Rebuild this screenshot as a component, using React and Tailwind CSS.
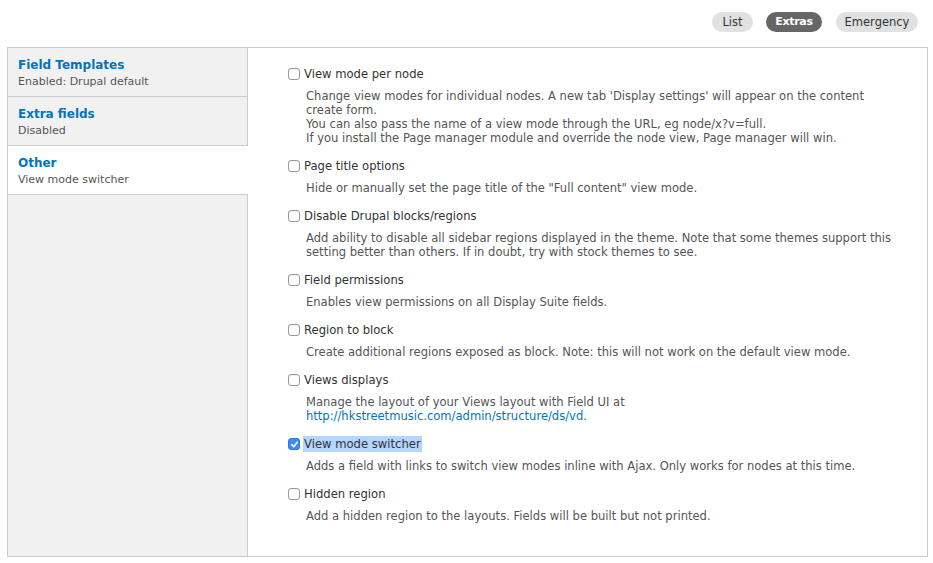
import React, { useState } from "react";

const tabs = [
  { title: "Field Templates", summary: "Enabled: Drupal default" },
  { title: "Extra fields", summary: "Disabled" },
  { title: "Other", summary: "View mode switcher" },
];

const options = [
  {
    label: "View mode per node",
    desc: [
      "Change view modes for individual nodes. A new tab 'Display settings' will appear on the content",
      "create form.",
      "You can also pass the name of a view mode through the URL, eg node/x?v=full.",
      "If you install the Page manager module and override the node view, Page manager will win.",
    ],
  },
  {
    label: "Page title options",
    desc: ['Hide or manually set the page title of the "Full content" view mode.'],
  },
  {
    label: "Disable Drupal blocks/regions",
    desc: [
      "Add ability to disable all sidebar regions displayed in the theme. Note that some themes support this",
      "setting better than others. If in doubt, try with stock themes to see.",
    ],
  },
  {
    label: "Field permissions",
    desc: ["Enables view permissions on all Display Suite fields."],
  },
  {
    label: "Region to block",
    desc: ["Create additional regions exposed as block. Note: this will not work on the default view mode."],
  },
  {
    label: "Views displays",
    desc: ["Manage the layout of your Views layout with Field UI at"],
    link: "http://hkstreetmusic.com/admin/structure/ds/vd",
  },
  {
    label: "View mode switcher",
    desc: ["Adds a field with links to switch view modes inline with Ajax. Only works for nodes at this time."],
    checked: true,
  },
  {
    label: "Hidden region",
    desc: ["Add a hidden region to the layouts. Fields will be built but not printed."],
  },
];

function Checkbox({ checked }) {
  if (checked) {
    return (
      <span className="w-[12px] h-[12px] rounded-[3px] bg-[#3b8cf5] border border-[#2f7be0] flex items-center justify-center shrink-0">
        <svg width="9" height="9" viewBox="0 0 10 10">
          <path d="M2 5.2 L4.2 7.4 L8 2.4" fill="none" stroke="white" strokeWidth="1.8" strokeLinecap="round" strokeLinejoin="round" />
        </svg>
      </span>
    );
  }
  return (
    <span className="w-[12px] h-[12px] rounded-[3px] bg-white border border-[#9a9a9a] shadow-[inset_0_1px_1px_rgba(0,0,0,0.08)] shrink-0" />
  );
}

export default function App() {
  const [active] = useState(2);

  return (
    <div
      className="w-[933px] h-[563px] bg-white text-[#333] overflow-hidden"
      style={{ fontFamily: '"DejaVu Sans", "Lucida Grande", Verdana, sans-serif' }}
    >
      {/* secondary tabs */}
      <div className="flex justify-end pt-[12px] pr-[15px] h-[47px]">
        <span className="w-[41px] h-[20px] rounded-[10px] bg-[#e1e1e1] text-[#333] text-[11.5px] leading-[20px] text-center">List</span>
        <span className="ml-[13px] w-[56px] h-[20px] rounded-[10px] bg-[#666] text-white font-bold text-[11px] leading-[20px] text-center tracking-[-0.3px]">Extras</span>
        <span className="ml-[14px] w-[82px] h-[20px] rounded-[10px] bg-[#e1e1e1] text-[#333] text-[11.5px] leading-[20px] text-center">Emergency</span>
      </div>

      <div className="ml-[7px] w-[921px] h-[510px] border border-[#ccc] flex">
        {/* vertical tabs */}
        <div className="w-[240px] bg-[#f1f1f1] border-r border-[#ccc] flex flex-col shrink-0">
          {tabs.map((t, i) => (
            <div
              key={t.title}
              className={
                "h-[49px] pl-[10px] pt-[10px] border-b border-[#ccc] " +
                (i === active ? "bg-white -mr-px" : "")
              }
            >
              <div className="text-[#0074bd] font-bold text-[12px] leading-[15px]">{t.title}</div>
              <div className="text-[#555] text-[11px] leading-[17px]">{t.summary}</div>
            </div>
          ))}
        </div>

        {/* panel */}
        <div className="flex-1 pl-[40px] pt-[17px]">
          {options.map((o) => (
            <div key={o.label} className="mb-[12px]">
              <div className="flex items-center h-[18px]">
                <Checkbox checked={o.checked} />
                <span
                  className={
                    "ml-[3px] text-[11.6px] leading-[16px] px-[1px] " +
                    (o.checked ? "bg-[#b4d5fe]" : "")
                  }
                >
                  {o.label}
                </span>
              </div>
              <div className="mt-[6px] pl-[18px] text-[11.55px] leading-[14px] text-[#555]">
                {o.desc.map((d) => (
                  <div key={d}>{d}</div>
                ))}
                {o.link && (
                  <div>
                    <span className="text-[#0074bd]">{o.link}</span>.
                  </div>
                )}
              </div>
            </div>
          ))}
        </div>
      </div>
    </div>
  );
}
